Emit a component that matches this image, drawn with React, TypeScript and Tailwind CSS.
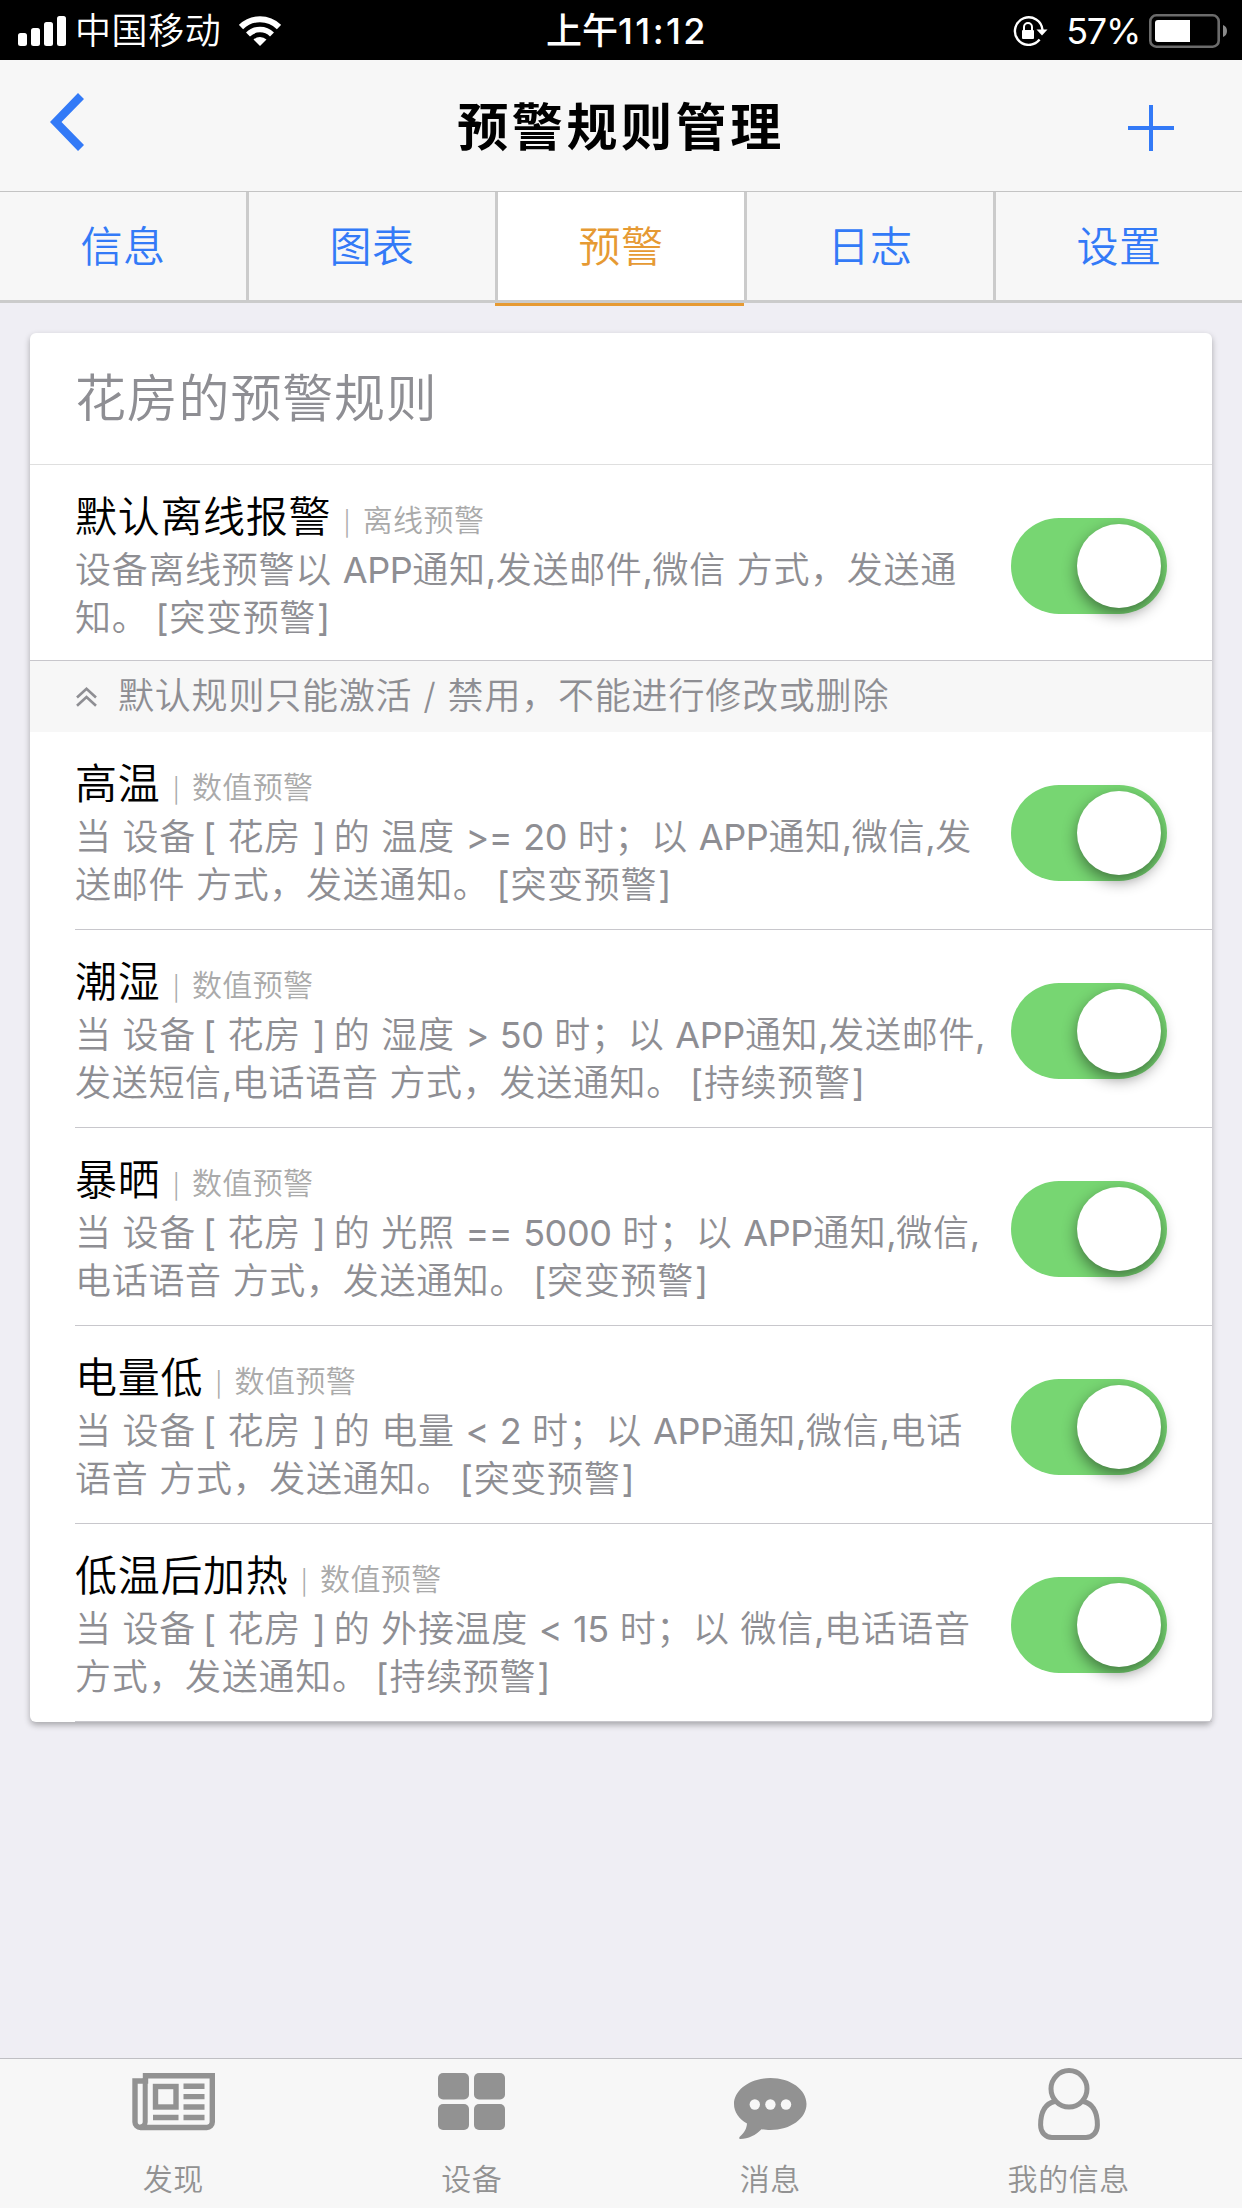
import { useState } from 'react';
import clsx from 'clsx';

interface Rule {
  name: string;
  type: string;
  lines: string[];
}

const defaultRule: Rule = {
  name: '默认离线报警',
  type: '离线预警',
  lines: ['设备离线预警以 APP通知,发送邮件,微信 方式，发送通', '知。[突变预警]'],
};

const rules: Rule[] = [
  {
    name: '高温',
    type: '数值预警',
    lines: ['当 设备[ 花房 ]的 温度 >= 20 时；以 APP通知,微信,发', '送邮件 方式，发送通知。[突变预警]'],
  },
  {
    name: '潮湿',
    type: '数值预警',
    lines: ['当 设备[ 花房 ]的 湿度 > 50 时；以 APP通知,发送邮件,', '发送短信,电话语音 方式，发送通知。[持续预警]'],
  },
  {
    name: '暴晒',
    type: '数值预警',
    lines: ['当 设备[ 花房 ]的 光照 == 5000 时；以 APP通知,微信,', '电话语音 方式，发送通知。[突变预警]'],
  },
  {
    name: '电量低',
    type: '数值预警',
    lines: ['当 设备[ 花房 ]的 电量 < 2 时；以 APP通知,微信,电话', '语音 方式，发送通知。[突变预警]'],
  },
  {
    name: '低温后加热',
    type: '数值预警',
    lines: ['当 设备[ 花房 ]的 外接温度 < 15 时；以 微信,电话语音', '方式，发送通知。[持续预警]'],
  },
];

const tabs = ['信息', '图表', '预警', '日志', '设置'];

function StatusBar() {
  return (
    <div className="grid h-[60px] grid-cols-[1fr_auto_1fr] items-center bg-black text-[36px] leading-[60px] text-white">
      <div className="flex h-[60px] items-center pl-[18px]">
        <svg width="48" height="30" viewBox="0 0 48 30" fill="currentColor">
          <rect x="0" y="17" width="9" height="13" rx="2.5" />
          <rect x="13" y="12" width="9" height="18" rx="2.5" />
          <rect x="26" y="6" width="9" height="24" rx="2.5" />
          <rect x="39" y="0" width="9" height="30" rx="2.5" />
        </svg>
        <span className="ml-[9px] pt-[1px] tracking-[0.6px]">中国移动</span>
        <svg className="ml-[18px]" width="42" height="30" viewBox="0 0 42 30">
          <path d="M2 11 A27 27 0 0 1 40 11" fill="none" stroke="currentColor" strokeWidth="6" />
          <path d="M9 18.5 A17 17 0 0 1 33 18.5" fill="none" stroke="currentColor" strokeWidth="5.6" />
          <path d="M21 30 L14.5 23.6 A9.4 9.4 0 0 1 27.5 23.6 Z" fill="currentColor" />
        </svg>
      </div>
      <span className="pt-[1px] pl-[12px] font-medium">
        上午<span className="tracking-[2.4px]">11:12</span>
      </span>
      <div className="flex h-[60px] items-center justify-end pr-[15px]">
        <svg width="35" height="30" viewBox="0 0 35 30">
          <path d="M29.5 14 A13.8 13.8 0 1 0 26.6 23.6" fill="none" stroke="currentColor" strokeWidth="2.4" />
          <path d="M23.5 13.4 H34.5 L29 19.4 Z" fill="currentColor" />
          <rect x="9" y="14" width="12" height="9" rx="1" fill="currentColor" />
          <path d="M11 14.5 V11 a4 4 0 0 1 8 0 V14.5" fill="none" stroke="currentColor" strokeWidth="2" />
        </svg>
        <span className="ml-[18px] pt-[1px] font-normal tracking-[-1.3px]">57%</span>
        <svg className="ml-[9px]" width="78" height="34" viewBox="0 0 78 34">
          <rect x="1.3" y="1.3" width="68.4" height="31.4" rx="6" fill="none" stroke="#6b6b6b" strokeWidth="2.6" />
          <path d="M9 6 H41 V28 H9 a3 3 0 0 1 -3 -3 V9 a3 3 0 0 1 3 -3 Z" fill="#fff" />
          <path d="M74 11 a6.5 6.5 0 0 1 0 12 Z" fill="#8a8a8a" />
        </svg>
      </div>
    </div>
  );
}

function NavBar() {
  return (
    <div className="grid h-[132px] grid-cols-[1fr_auto_1fr] items-center border-b border-[#c4c4c4] bg-[#f7f7f7]">
      <button className="justify-self-start pl-[50px]">
        <svg className="-mt-[7px]" width="34" height="58" viewBox="0 0 34 58" fill="#337af7">
          <path d="M28 0 L34 6 L11.5 29 L34 52 L28 58 L0 29 Z" />
        </svg>
      </button>
      <h1 className="pt-[3px] text-[51px] leading-none font-bold tracking-[3.6px]">预警规则管理</h1>
      <button className="justify-self-end pr-[68px]">
        <svg className="mt-[4px]" width="46" height="46" viewBox="0 0 46 46" fill="#337af7">
          <rect x="0" y="21" width="46" height="4" />
          <rect x="21" y="0" width="4" height="46" />
        </svg>
      </button>
    </div>
  );
}

function Switch({ on, onChange }: { on: boolean; onChange: () => void }) {
  return (
    <button
      role="switch"
      aria-checked={on}
      onClick={onChange}
      className={clsx(
        'flex h-[96px] w-[156px] shrink-0 items-center rounded-full p-[6px]',
        on ? 'justify-end bg-[#77d672]' : 'justify-start bg-gray-200',
      )}
    >
      <span className="size-[84px] rounded-full bg-white shadow-[0_6px_15px_rgba(0,0,0,0.45)]" />
    </button>
  );
}

// Latin runs sit tighter than the Chinese text, brackets sit wider
function RuleLine({ text }: { text: string }) {
  return (
    <p className="h-[48px] text-[36px] leading-[48px] tracking-[0.7px] text-[#8e8e93]">
      {text.split(/([[\]]|[!-Z^-~]+)/).map((part, i) => {
        if (part === '[') return <span key={i} className="ml-[7px] font-normal">[</span>;
        if (part === ']') return <span key={i} className="ml-[1px] mr-[7px] font-normal">]</span>;
        if (/^[!-~]+$/.test(part)) return <span key={i} className="font-normal tracking-[-0.4px]">{part}</span>;
        return part;
      })}
    </p>
  );
}

function RuleRow({ rule, className }: { rule: Rule; className?: string }) {
  const [on, setOn] = useState(true);

  return (
    <div className={clsx('flex justify-between pr-[45px]', className)}>
      <div className="pt-[22px] whitespace-nowrap">
        <div className="flex h-[59px] items-baseline leading-[60px]">
          <span className="text-[42px] tracking-[0.7px] text-black">{rule.name}</span>
          <span className="ml-[12px] text-[24px] text-[#aaa]">|</span>
          <span className="relative -top-px ml-[12px] text-[30px] tracking-[0.4px] text-[#aaa]">{rule.type}</span>
        </div>
        {rule.lines.map((line) => (
          <RuleLine key={line} text={line} />
        ))}
      </div>
      <div className="pt-[53px]">
        <Switch on={on} onChange={() => setOn(!on)} />
      </div>
    </div>
  );
}

function NewsIcon() {
  return (
    <svg width="83" height="58" viewBox="0 0 83 58" fill="none" stroke="currentColor" strokeWidth="5.4">
      <path d="M13.5 2.8 H80.3 V49 a5.5 5.5 0 0 1 -5.5 5.5 H8.5 a5.5 5.5 0 0 1 -5.5 -5.5 V8 H13.5 Z" />
      <path d="M13.2 5 V49 a5 5 0 0 1 -5 5" strokeWidth="5" />
      <rect x="23.5" y="13.5" width="20.5" height="20.5" />
      <path d="M51.5 13.3 H72.5 M51.5 23.6 H72.5 M51.5 34 H72.5 M51.5 44.5 H72.5 M21 44.5 H46.5" />
    </svg>
  );
}

function GridIcon() {
  return (
    <svg width="67" height="58" viewBox="0 0 67 58" fill="currentColor">
      <rect x="0" y="0" width="31" height="26.5" rx="5" />
      <rect x="36" y="0" width="31" height="26.5" rx="5" />
      <rect x="0" y="31" width="31" height="26" rx="5" />
      <rect x="36" y="31" width="31" height="26" rx="5" />
    </svg>
  );
}

function ChatIcon() {
  return (
    <svg width="73" height="62" viewBox="0 0 73 62">
      <path
        d="M36.5 0 C56.5 0 72.5 11.5 72.5 26 C72.5 40.5 56.5 52 36.5 52 C33 52 30.5 51.8 27.5 51.2 C22 57 14 61 6.5 61 C5 61 4.8 59.6 6 58.5 C10.5 54.5 12.5 51 13 45.5 C5 41 0 34 0 26 C0 11.5 16.5 0 36.5 0 Z"
        fill="currentColor"
      />
      <circle cx="20.8" cy="26.5" r="5.2" fill="#f7f7f7" />
      <circle cx="36.4" cy="26.5" r="5.2" fill="#f7f7f7" />
      <circle cx="52" cy="26.5" r="5.2" fill="#f7f7f7" />
    </svg>
  );
}

function PersonIcon() {
  return (
    <svg width="62" height="72" viewBox="0 0 62 72" fill="none" stroke="currentColor" strokeWidth="5">
      <ellipse cx="31" cy="20.8" rx="18" ry="18.2" />
      <path d="M16.5 33.5 C6.5 36 2.6 44 2.6 57 C2.6 64.5 7.5 69.5 14 69.5 H48 C54.5 69.5 59.4 64.5 59.4 57 C59.4 44 55.5 36 45.5 33.5" />
    </svg>
  );
}

const menu = [
  { label: '发现', icon: <NewsIcon />, offset: 'pt-[14px]' },
  { label: '设备', icon: <GridIcon />, offset: 'pt-[14px]' },
  { label: '消息', icon: <ChatIcon />, offset: 'pt-[19px]' },
  { label: '我的信息', icon: <PersonIcon />, offset: 'pt-[9px]' },
];

export default function App() {
  const [active, setActive] = useState('预警');

  return (
    <div className="flex h-[2208px] w-[1242px] flex-col overflow-hidden bg-[#efeef4] font-[Inter,'Noto_Sans_CJK_SC',sans-serif] font-[350]">
      <StatusBar />
      <NavBar />

      <nav className="grid h-[111px] shrink-0 grid-cols-[246px_249px_249px_249px_249px] border-b-[3px] border-[#cbcbcb] bg-[#f7f7f7] text-[42px]">
        {tabs.map((tab, i) => (
          <button
            key={tab}
            onClick={() => setActive(tab)}
            className={clsx(
              'h-[108px] tracking-[0.6px]',
              i > 0 && 'border-l-[3px] border-[#cbcbcb]',
              tab === active ? 'bg-white text-[#e69a33]' : 'text-[#337af7]',
            )}
          >
            {tab}
          </button>
        ))}
      </nav>
      <div className="ml-[495px] h-[3px] w-[249px] shrink-0 bg-[#e69a33]" />

      <main className="mx-[30px] mt-[27px] rounded-[6px] bg-white shadow-[0_3px_6px_rgba(0,0,0,0.3)]">
        <h2 className="h-[132px] border-b border-[#dfdfdf] pl-[45px] text-[51px] leading-[131px] tracking-[0.8px] text-[#8e8e93]">
          花房的预警规则
        </h2>
        <RuleRow rule={defaultRule} className="h-[196px] border-b border-[#c8c7cc] pl-[45px]" />
        <div className="flex h-[71px] items-center bg-[#f7f7f7] pl-[46px] text-[36px] tracking-[0.8px] text-[#8e8e93]">
          <svg width="21" height="20" viewBox="0 0 21 20" fill="none" stroke="currentColor" strokeWidth="2.6">
            <path d="M1 10.5 L10.5 1.8 L20 10.5 M1 18.8 L10.5 10.1 L20 18.8" />
          </svg>
          <span className="ml-[21px] pb-[2px] whitespace-nowrap">默认规则只能激活 / 禁用，不能进行修改或删除</span>
        </div>
        {rules.map((rule) => (
          <RuleRow key={rule.name} rule={rule} className="ml-[45px] h-[198px] border-b border-[#c8c7cc]" />
        ))}
      </main>

      <footer className="mt-auto grid h-[150px] shrink-0 grid-cols-4 border-t border-[#bfbfc3] bg-[#f7f7f7] px-[24px] text-[#929292]">
        {menu.map((item) => (
          <button key={item.label} className="flex flex-col items-center">
            <span className={clsx('h-[98px]', item.offset)}>{item.icon}</span>
            <span className="text-[30px] leading-[45px] tracking-[0.6px]">{item.label}</span>
          </button>
        ))}
      </footer>
    </div>
  );
}
